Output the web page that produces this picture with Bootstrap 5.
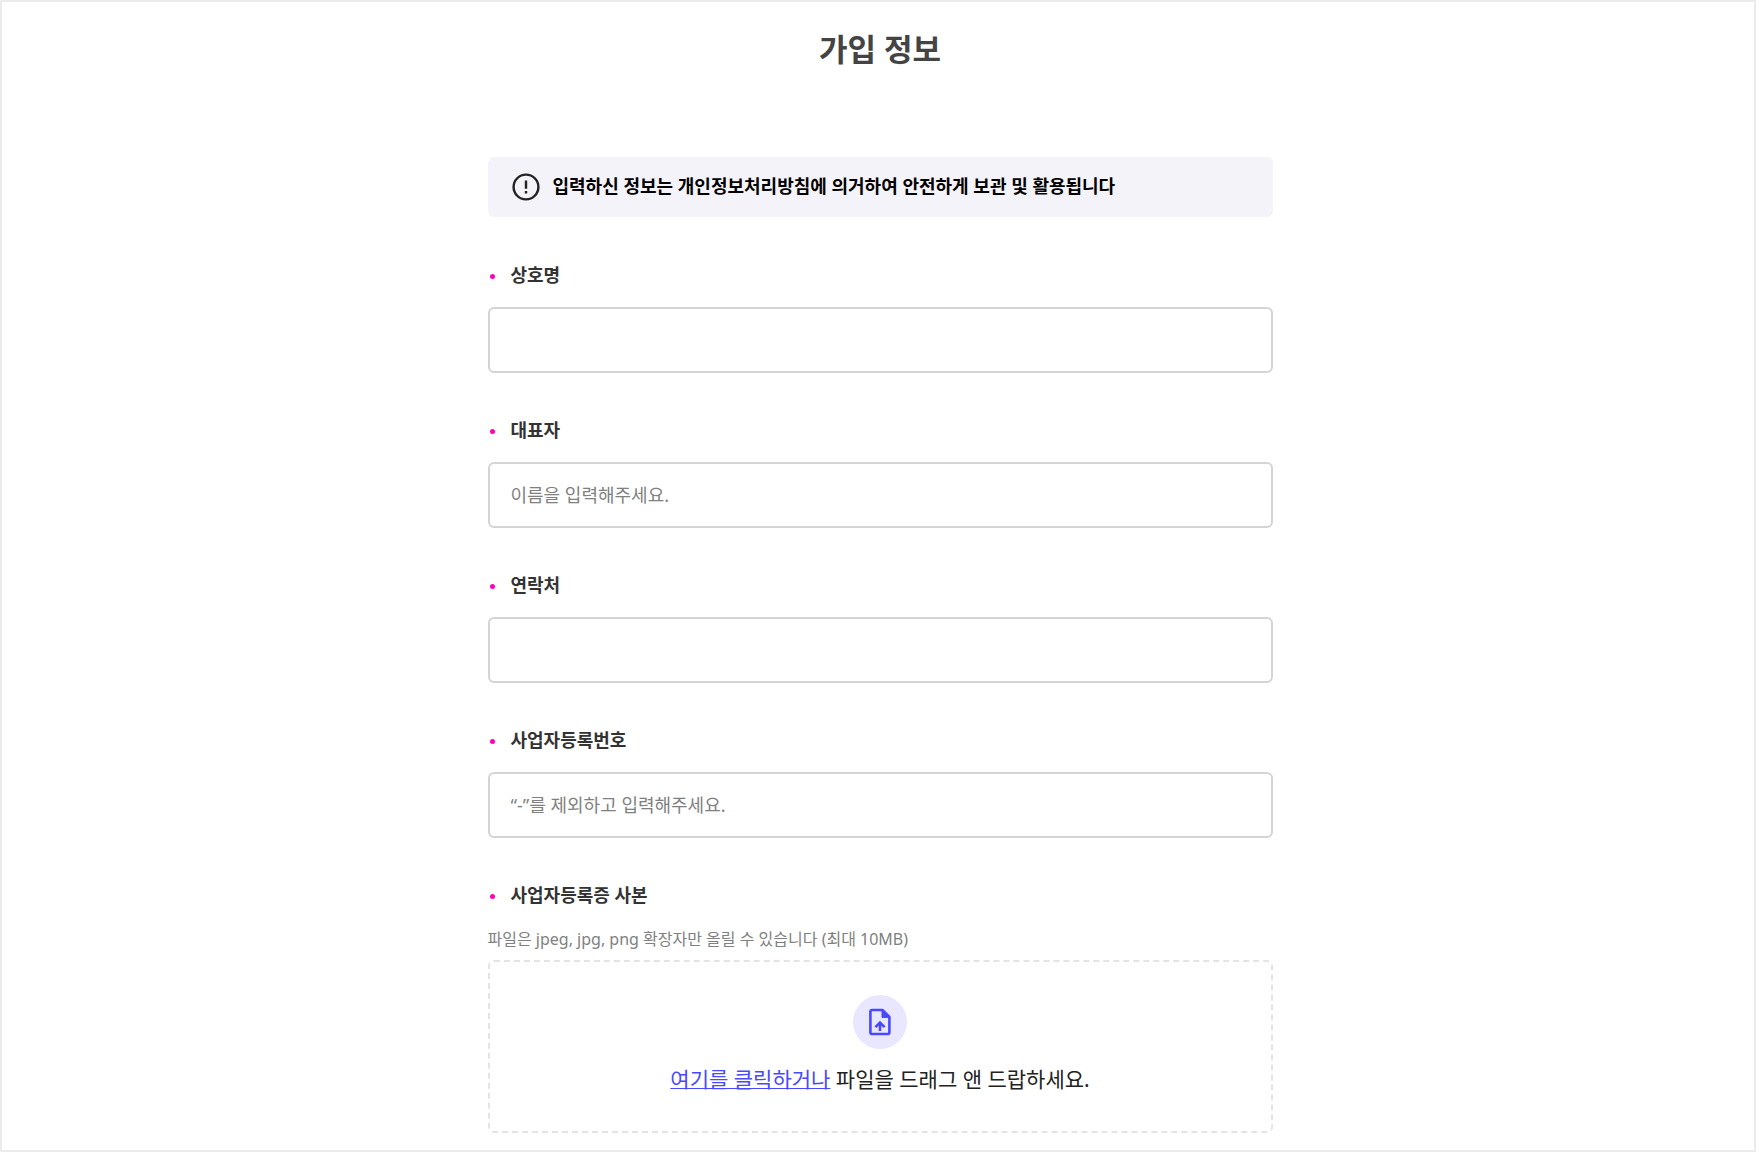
<!DOCTYPE html>
<html lang="ko">
<head>
<meta charset="utf-8">
<meta name="viewport" content="width=device-width, initial-scale=1">
<title>가입 정보</title>
<link href="https://cdn.jsdelivr.net/npm/bootstrap@5.3.0/dist/css/bootstrap.min.css" rel="stylesheet">
<style>
  body { font-family: "Noto Sans", "Noto Sans CJK KR", sans-serif; font-size: 18px; line-height: 26px; color: #222; background: #fff; }
  .page-frame { min-height: 100vh; border: 2px solid #ebebeb; padding: 24px 12px 16px 16px; }
  .signup { max-width: 785px; }
  .page-title { font-size: 31px; line-height: 46px; font-weight: 700; color: #444; margin-bottom: 85px; }
  .notice { background: #f4f3f9; border-radius: 6px; padding: 16px 24px 18px; gap: 13px; color: #000; font-weight: 600; margin-bottom: 45px; }
  .notice svg { width: 28px; height: 28px; margin: 0 0 -2px; }
  .field { margin-bottom: 44px; }
  .field-label { display: flex; align-items: center; gap: 16px; padding-left: 2px; margin-bottom: 19px; font-weight: 600; color: #333; }
  .field-label::before { content: ""; width: 5px; height: 5px; margin-top: 2px; border-radius: 50%; background: #f0b; }
  .field .form-control { height: 66px; padding: 0 21px; border: 2px solid #d4d4d4; border-radius: 6px; font-size: 18px; color: #222; }
  .field .form-control::placeholder { color: #808080; }
  .file-hint { font-size: 16px; line-height: 24px; color: #808080; margin-bottom: 9px; }
  .drop-zone { border: 2px dashed #e4e4e4; border-radius: 6px; padding: 33px 16px 36px; font-size: 21px; line-height: 32px; color: #222; gap: 14px; }
  .drop-zone a { color: #4a48ff; text-decoration-thickness: 1px; }
  .upload-badge { width: 54px; height: 54px; background: #e8e7ff; color: #4a48ff; }
  .upload-badge svg { width: 32px; height: 32px; }
</style>
</head>
<body>
<main class="page-frame">
  <form class="signup mx-auto">
    <h1 class="page-title text-center">가입 정보</h1>
    <div class="notice d-flex align-items-center" role="note">
      <svg viewBox="0 0 28 28" fill="none" stroke="#222" aria-hidden="true">
        <circle cx="14" cy="14" r="12.4" stroke-width="2.4"/>
        <path d="M14 7.6v8.2M14 18v2.4" stroke-width="2.4"/>
      </svg>
      <span>입력하신 정보는 개인정보처리방침에 의거하여 안전하게 보관 및 활용됩니다</span>
    </div>
    <div class="field">
      <label class="field-label" for="company">상호명</label>
      <input class="form-control" type="text" id="company" required>
    </div>
    <div class="field">
      <label class="field-label" for="owner">대표자</label>
      <input class="form-control" type="text" id="owner" placeholder="이름을 입력해주세요." required>
    </div>
    <div class="field">
      <label class="field-label" for="phone">연락처</label>
      <input class="form-control" type="tel" id="phone" required>
    </div>
    <div class="field">
      <label class="field-label" for="bizno">사업자등록번호</label>
      <input class="form-control" type="text" id="bizno" placeholder="“-”를 제외하고 입력해주세요." required>
    </div>
    <div>
      <label class="field-label" for="bizfile">사업자등록증 사본</label>
      <p class="file-hint">파일은 jpeg, jpg, png 확장자만 올릴 수 있습니다 (최대 10MB)</p>
      <div class="drop-zone d-flex flex-column align-items-center text-center">
        <span class="upload-badge rounded-circle d-flex align-items-center justify-content-center">
          <svg viewBox="0 0 32 32" fill="none" stroke="currentColor" stroke-width="2.6" stroke-linejoin="round" aria-hidden="true">
            <path d="M8.200 4h10.200l7 7v15.200a1.800 1.800 0 0 1-1.800 1.800H8.200a1.800 1.800 0 0 1-1.800-1.800V5.800A1.800 1.800 0 0 1 8.200 4z"/>
            <path d="M18 4v7.400h7.400z" fill="currentColor" stroke-width="1"/>
            <path d="M16 25v-8M11.400 21.200l4.600-4.600 4.600 4.600" stroke-linejoin="miter"/>
          </svg>
        </span>
        <div><a href="#bizfile">여기를 클릭하거나</a> 파일을 드래그 앤 드랍하세요.</div>
        <input class="d-none" type="file" id="bizfile" accept="image/jpeg,image/png">
      </div>
    </div>
  </form>
</main>
<script src="https://cdn.jsdelivr.net/npm/bootstrap@5.3.0/dist/js/bootstrap.bundle.min.js"></script>
</body>
</html>
